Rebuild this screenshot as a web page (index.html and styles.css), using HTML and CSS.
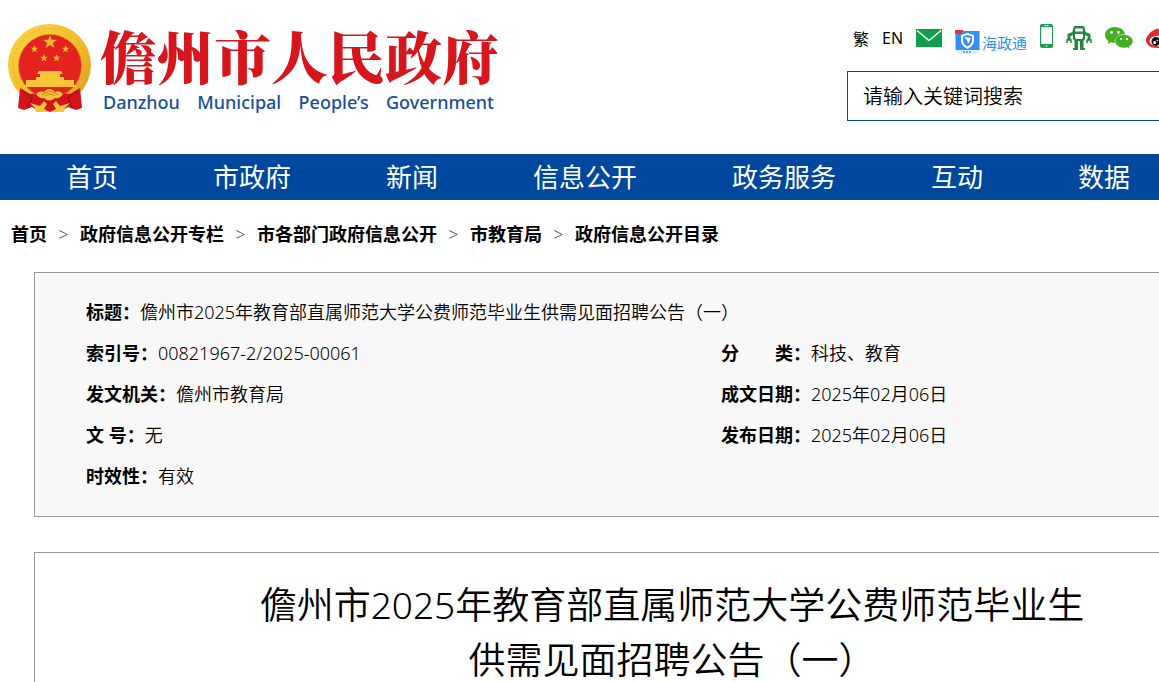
FILE: index.html
```html
<!DOCTYPE html>
<html lang="zh-CN">

<head>
    <meta charset="UTF-8" />
    <meta name="viewport" content="width=device-width, initial-scale=1.0" />
    <title>儋州市2025年教育部直属师范大学公费师范毕业生供需见面招聘公告（一）</title>
    <link rel="stylesheet" href="styles.css">
</head>

<body>
    <div class="page">
        <header class="header">
            <a class="logo" href="#">
                <!-- National emblem -->
                <svg class="emblem" viewBox="0 0 84 89" aria-hidden="true">
                    <defs>
                        <path id="star" d="M0-6 1.5-1.9 5.8-1.8 2.4.8 3.6 5 0 2.5-3.6 5-2.4.8-5.8-1.8-1.5-1.9Z" />
                        <linearGradient id="gold" x1="0" y1="0" x2="1" y2="1">
                            <stop offset="0" stop-color="#fbd545" />
                            <stop offset="0.5" stop-color="#f4be2c" />
                            <stop offset="1" stop-color="#dc9a1e" />
                        </linearGradient>
                    </defs>
                    <ellipse cx="41.500" cy="41" rx="41.500" ry="41" fill="url(#gold)" />
                    <ellipse cx="41.500" cy="41" rx="36.500" ry="36.500" fill="none" stroke="#e8b032" stroke-width="1" stroke-dasharray="3 2" />
                    <circle cx="42" cy="42" r="31.500" fill="#e42320" stroke="#c98a1a" stroke-width="0.600" />
                    <g fill="#e9b52e">
                        <use href="#star" transform="translate(42 18) scale(1.200)" />
                        <use href="#star" transform="translate(26.500 25) scale(.65)" />
                        <use href="#star" transform="translate(57.500 25) scale(.65)" />
                        <use href="#star" transform="translate(36 34) scale(.65)" />
                        <use href="#star" transform="translate(48.500 34) scale(.65)" />
                    </g>
                    <path fill="#f6c53a" d="M31 47h22l2 3H29zM32 50h20v3H32zM28 53h28v5H28zM18 56h10v2h28v-2h10v5h2v2H16v-2h2z" />
                    <path d="M12 64 22 70 32 69 36 73 48 73 52 69 62 70 72 64 74 84 68 86 60 83 52 88 32 88 24 83 16 86 10 84Z" fill="#d3151b" />
                    <path d="M14 66 24 74 20 84M70 66 60 74 64 84" fill="none" stroke="#a90d13" stroke-width="1.500" />
                    <path d="M28 70q4-4 8-2 5-6 11 0 5-2 8 2-3 5-8 4 -6 5-11 0-5 1-8-4zM22 79l10 3 4-5 3 3-3 5 6 3H28l-1-4zM62 79l-10 3-4-5-3 3 3 5-6 3h14l1-4z" fill="#f6c53a" />
                    <path d="M34 71q8-7 16 0M37 72q5-4 10 0" fill="none" stroke="#c98516" />
                </svg>
                <span class="logo-text">
                    <span class="logo-cn">儋州市人民政府</span>
                    <span class="logo-en">Danzhou Municipal People’s Government</span>
                </span>
            </a>

            <div class="header-tools">
                <div class="quick-links">
                    <a href="#">繁</a>
                    <a href="#">EN</a>
                    <a href="#" aria-label="邮箱">
                        <svg width="26" height="18" viewBox="0 0 26 18">
                            <rect width="26" height="18" fill="#0e9f4b" />
                            <path d="M1 1.500 13 11.500 25 1.500" fill="none" stroke="#fff" stroke-width="1.500" />
                        </svg>
                    </a>
                    <a class="hzt" href="#">
                        <svg width="25" height="25" viewBox="0 0 25 25" aria-hidden="true">
                            <rect x="0.500" y="1" width="24" height="19" fill="#338ef5" />
                            <path d="M0 0h8v2L6 4H0z" fill="#e3342f" />
                            <path d="M12.500 3 19 5v5q0 6-6.500 9Q6 16 6 10V5z" fill="#fff" />
                            <path d="M12.500 5 17 6.500V10q0 4.500-4.500 6.500Q8 14.500 8 10V6.500z" fill="#338ef5" />
                            <path d="m9 7 7 1-3 6-1-4z" fill="#fff" />
                            <path d="M1 20h23v4H1z" fill="#e3f0ff" />
                            <path d="M8 22h9" stroke="#66aef8" stroke-width="2" stroke-dasharray="2 1" />
                        </svg>
                        <span>海政通</span>
                    </a>
                    <a class="phone" href="#" aria-label="手机版">
                        <svg width="13" height="24" viewBox="0 0 13 24">
                            <rect width="13" height="24" rx="2" fill="#199d4f" />
                            <path d="M1 3h11v17H1z" fill="#fff" />
                            <path d="M4.500 1.500h4M5.500 22h2" stroke="#fff" />
                        </svg>
                    </a>
                    <a href="#" aria-label="智能问答">
                        <svg width="26" height="24" viewBox="0 0 26 24">
                            <path d="M8 0h10l2 7H6z" fill="#278641" />
                            <path d="M9.500 2.500h7l.5 3H9z" fill="#fff" />
                            <path d="M7 6h12v6q0 3-3 3h-6q-3 0-3-3z" fill="#278641" />
                            <path d="M9 8h8v3q0 2-2 2h-4q-2 0-2-2z" fill="#fff" />
                            <path d="M7 7.500 3 9v5M19 7.500 23 9v5" fill="none" stroke="#278641" stroke-width="3" />
                            <path d="M1 17v-3h4v3M21 17v-3h4v3" fill="none" stroke="#278641" stroke-width="1.500" />
                            <path d="M8.500 14H12v10H7v-2h1.500zM14 14h3.500v8H19v2h-5z" fill="#278641" />
                        </svg>
                    </a>
                    <a href="#" aria-label="微信">
                        <svg width="28" height="22" viewBox="0 0 28 22">
                            <path d="M10 0C4.500 0 0 3.500 0 8c0 2.600 1.500 4.700 3.600 6.200L2.700 17l3.400-1.700q2 .6 3.900.6C15.500 15.900 20 12.400 20 8S15.500 0 10 0z" fill="#46ae22" />
                            <path d="M19 7.500c-5 0-9 3-9 6.800s4 6.700 9 6.700q1.500 0 3-.5l3 1.500-.8-2.500c2.300-1.200 3.800-3.100 3.800-5.200 0-3.800-4-6.800-9-6.800z" fill="#46ae22" stroke="#fff" stroke-width="0.500" />
                            <circle cx="6.500" cy="5.500" r="1.400" fill="#fff" />
                            <circle cx="13.500" cy="5.500" r="1.400" fill="#fff" />
                            <circle cx="16" cy="12" r="1.200" fill="#fff" />
                            <circle cx="22" cy="12" r="1.200" fill="#fff" />
                        </svg>
                    </a>
                    <a href="#" aria-label="微博">
                        <svg width="28" height="22" viewBox="0 0 28 22">
                            <path d="M10 2C5 4 0 9 0 13.500 0 18 5 21 11 21c7 0 12-3.500 12-7 0-2.500-2-3.500-4-4 1-3-1-4.500-6-2.500C14 4 13 1 10 2z" fill="#dd2b2b" />
                            <ellipse cx="12" cy="14" rx="8.500" ry="5.300" fill="#fff" />
                            <circle cx="10" cy="14.500" r="4.500" fill="#111" />
                            <circle cx="8.700" cy="15.500" r="1.500" fill="#fff" />
                            <circle cx="11.300" cy="13.500" r="0.700" fill="#fff" />
                            <path d="M18 1c5-1 9 3 8 8M18 5c2.500-.5 4.500 1.500 4 4" fill="none" stroke="#f39a1f" stroke-width="2" />
                        </svg>
                    </a>
                </div>
                <form class="search">
                    <input class="search-input" type="text" placeholder="请输入关键词搜索" aria-label="请输入关键词搜索">
                </form>
            </div>
        </header>

        <nav class="nav">
            <a href="#">首页</a>
            <a href="#">市政府</a>
            <a href="#">新闻</a>
            <a href="#">信息公开</a>
            <a href="#">政务服务</a>
            <a href="#">互动</a>
            <a href="#">数据</a>
        </nav>

        <div class="breadcrumb">
            <a href="#">首页</a>
            <span class="sep">&gt;</span>
            <a href="#">政府信息公开专栏</a>
            <span class="sep">&gt;</span>
            <a href="#">市各部门政府信息公开</a>
            <span class="sep">&gt;</span>
            <a href="#">市教育局</a>
            <span class="sep">&gt;</span>
            <a href="#">政府信息公开目录</a>
        </div>

        <main class="content">
            <!-- Document index info -->
            <dl class="info">
                <div class="info-item wide">
                    <dt>标题：</dt>
                    <dd>儋州市2025年教育部直属师范大学公费师范毕业生供需见面招聘公告（一）</dd>
                </div>
                <div class="info-item">
                    <dt>索引号：</dt>
                    <dd>00821967-2/2025-00061</dd>
                </div>
                <div class="info-item">
                    <dt>分　　类：</dt>
                    <dd>科技、教育</dd>
                </div>
                <div class="info-item">
                    <dt>发文机关：</dt>
                    <dd>儋州市教育局</dd>
                </div>
                <div class="info-item">
                    <dt>成文日期：</dt>
                    <dd>2025年02月06日</dd>
                </div>
                <div class="info-item">
                    <dt>文 号：</dt>
                    <dd>无</dd>
                </div>
                <div class="info-item">
                    <dt>发布日期：</dt>
                    <dd>2025年02月06日</dd>
                </div>
                <div class="info-item">
                    <dt>时效性：</dt>
                    <dd>有效</dd>
                </div>
            </dl>

            <article class="article">
                <h1 class="article-title">儋州市2025年教育部直属师范大学公费师范毕业生<br>供需见面招聘公告（一）</h1>
            </article>
        </main>
    </div>
</body>

</html>
```

FILE: styles.css
```css
* {
    box-sizing: border-box;
}

body {
    margin: 0;
    overflow-x: hidden;
    background: #fff;
    color: #000;
    font-family: "Noto Sans", "Noto Sans CJK SC", sans-serif;
    font-size: 18px;
}

a {
    color: inherit;
    text-decoration: none;
}

svg {
    display: block;
}

/* The site is laid out for wide desktop screens */
.page {
    min-width: 1344px;
}

/* Header */
.header {
    display: flex;
    justify-content: space-between;
    height: 154px;
    padding: 24px 34px 0 8px;
}

.logo {
    display: flex;
    align-items: flex-start;
    gap: 8px;
}

.emblem {
    width: 84px;
    height: 89px;
}

.logo-text {
    display: flex;
    flex-direction: column;
    gap: 6px;
}

.logo-cn {
    color: #d7151c;
    font-family: "Noto Serif CJK SC", "Noto Sans CJK SC", serif;
    font-size: 57px;
    font-weight: 900;
    line-height: 60px;
}

.logo-en {
    padding: 0 5px 0 3px;
    color: #17509a;
    font-size: 18px;
    font-weight: 500;
    line-height: 24px;
    text-align-last: justify;
}

.header-tools {
    width: 463px;
}

.quick-links {
    display: flex;
    align-items: center;
    gap: 13px;
    height: 28px;
    padding-left: 6px;
    font-size: 16px;
}

.hzt {
    display: flex;
    align-items: flex-end;
    gap: 2px;
    margin-top: 8px;
    color: #2f90f5;
    font-size: 15px;
    line-height: 24px;
}

.phone {
    margin-bottom: 4px;
}

.search {
    margin-top: 19px;
}

.search-input {
    width: 100%;
    height: 50px;
    padding: 0 15px;
    border: 1px solid #00489d;
    background: #fff;
    font-family: inherit;
    font-size: 20px;
    font-weight: 350;
}

.search-input::placeholder {
    color: #000;
    opacity: 1;
}

/* Main navigation */
.nav {
    display: flex;
    gap: 95px;
    padding-left: 66px;
    background: #00489d;
    color: #fff;
    font-size: 26px;
    line-height: 46px;
}

/* Breadcrumb */
.breadcrumb {
    display: flex;
    padding: 20px 11px;
    font-weight: 700;
    line-height: 28px;
}

.sep {
    width: 33px;
    color: #555;
    font-size: 18px;
    font-weight: 300;
    text-align: center;
}

/* Document info */
.content {
    padding: 4px 34px 0;
}

.info {
    display: grid;
    grid-template-columns: 635px 1fr;
    margin: 0 0 35px;
    padding: 19px 0 19px 51px;
    border: 1px solid #999;
    background: #f8f8f8;
    line-height: 41px;
}

.info-item {
    display: flex;
}

.wide {
    grid-column: 1 / -1;
}

.info dt {
    font-weight: 700;
}

.info dd {
    margin: 0;
    font-weight: 350;
}

/* Article */
.article {
    padding: 24px 50px;
    border: 1px solid #999;
}

.article-title {
    margin: 0;
    font-size: 37px;
    font-weight: 350;
    line-height: 55px;
    text-align: center;
}
```
